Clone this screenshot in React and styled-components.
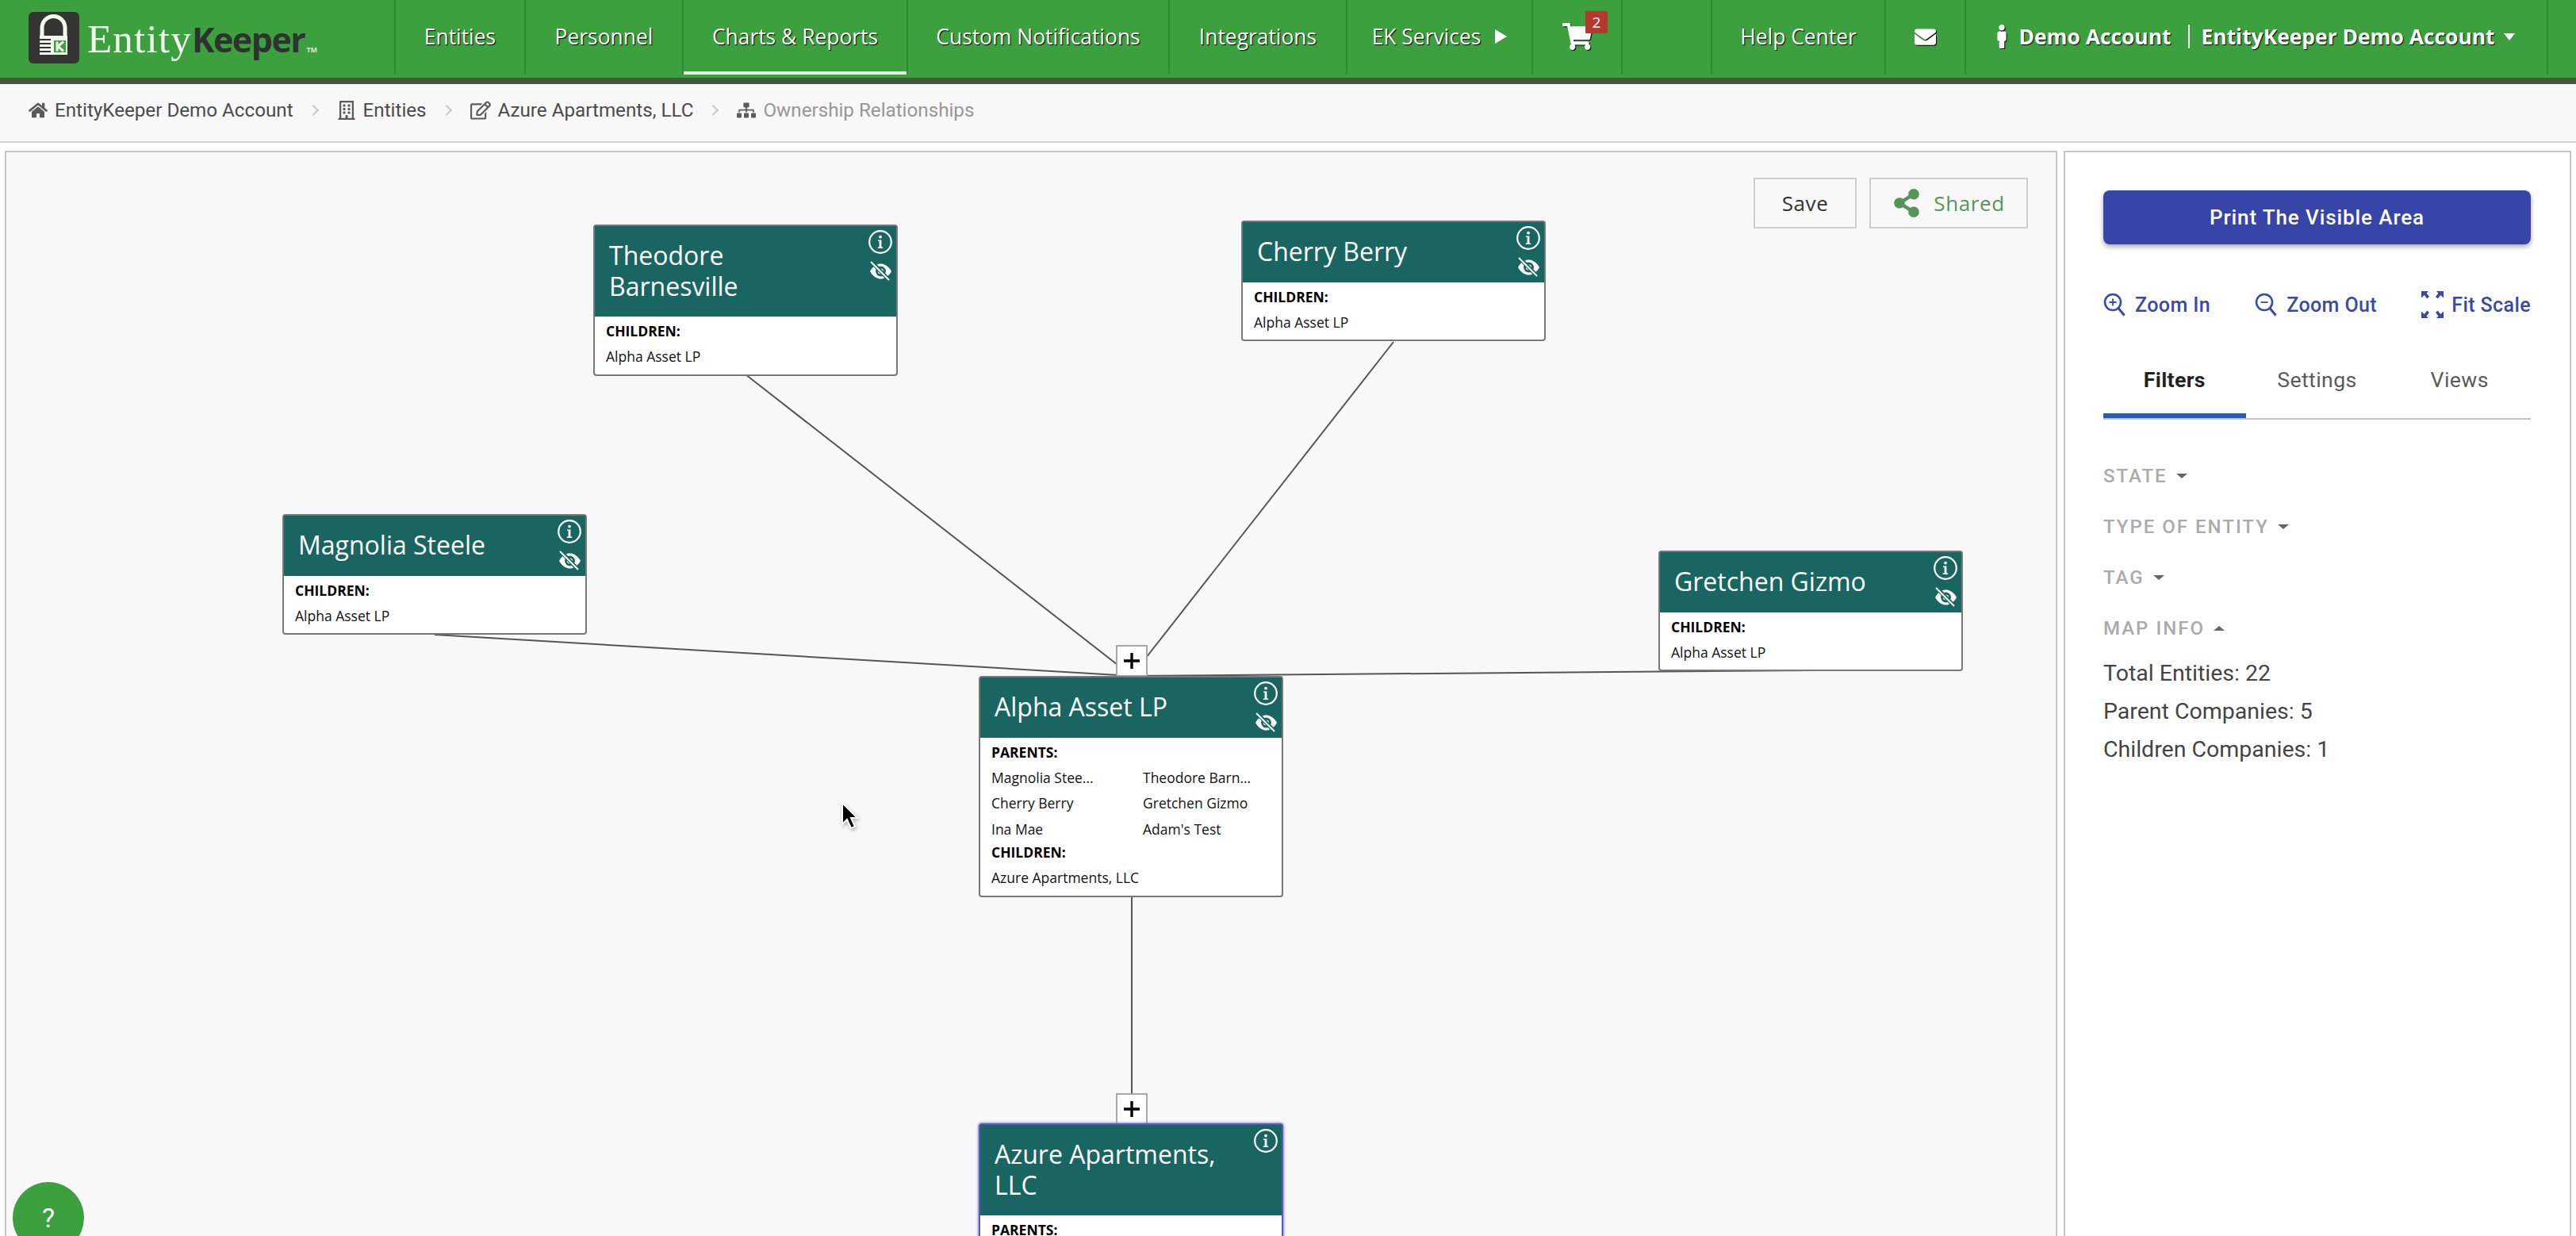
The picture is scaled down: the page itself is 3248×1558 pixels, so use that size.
import React from "react";
import styled, { createGlobalStyle } from "styled-components";
import {
	FaHome,
	FaRegBuilding,
	FaRegEdit,
	FaSitemap,
	FaShoppingCart,
	FaEnvelope,
	FaMale,
	FaShareAlt,
} from "react-icons/fa";

const GlobalStyle = createGlobalStyle`
	html, body {
		margin: 0;
		padding: 0;
		height: 100%;
		background: #fff;
		overflow: hidden;
	}
	* {
		box-sizing: border-box;
	}
`;

const Page = styled.div`
	height: 100vh;
	display: flex;
	flex-direction: column;
	overflow: hidden;
	font-family: Roboto, "Liberation Sans", sans-serif;
`;

/* top nav */
const Nav = styled.nav`
	height: 106px;
	flex: none;
	display: flex;
	background: #3ca03f;
	border-bottom: 8px solid #3f5b39;
`;

const LogoBlock = styled.div`
	width: 497px;
	height: 98px;
	padding: 15px 0 0 36px;
	display: flex;
	align-items: flex-start;
	flex: none;
`;

const LogoText = styled.div`
	margin-left: 10px;
	margin-top: 6px;
	display: flex;
	align-items: baseline;
	line-height: 56px;
`;

const LogoLight = styled.span`
	font-family: "Liberation Serif", serif;
	font-size: 51px;
	letter-spacing: 1.2px;
	color: #f2f8ee;
`;

const LogoDark = styled.span`
	font-family: "Open Sans", sans-serif;
	font-weight: 700;
	font-size: 43px;
	letter-spacing: -1.5px;
	color: #2f332f;
`;

const LogoMark = styled.span`
	font-family: "Open Sans", sans-serif;
	font-size: 9px;
	font-weight: 700;
	color: #d9e8d5;
	margin-left: 2px;
`;

const NavItem = styled.div`
	width: ${(p) => p.$w}px;
	height: 94px;
	flex: none;
	display: flex;
	align-items: center;
	justify-content: center;
	padding-bottom: 2px;
	padding-right: ${(p) => p.$pr || 0}px;
	position: relative;
	border-left: 2px solid #2f8a35;
	color: #fff;
	font-family: "Open Sans", sans-serif;
	font-size: 26.4px;
	font-weight: ${(p) => (p.$bold ? 700 : 400)};
	text-shadow: 1px 1px 1px #000;
	white-space: nowrap;
	box-shadow: ${(p) => (p.$active ? "inset 0 -4px 0 #e6efe4" : "none")};

	svg {
		filter: drop-shadow(1px 1px 0 #000);
	}
`;

const NavIconGap = styled.span`
	width: 6px;
`;

const NavTriangle = styled.span`
	width: 0;
	height: 0;
	margin-left: 18px;
	border-left: 15px solid #fff;
	border-top: 9px solid transparent;
	border-bottom: 9px solid transparent;
`;

const CartBadge = styled.span`
	position: absolute;
	left: 66px;
	top: 14px;
	width: 28px;
	height: 28px;
	background: #b4392c;
	color: #fff;
	font-size: 19px;
	line-height: 28px;
	text-align: center;
	text-shadow: none;
`;

const PipeSep = styled.span`
	width: 2px;
	height: 30px;
	margin: 0 15px 0 21px;
	background: #fff;
`;

const AccountCaret = styled.span`
	width: 0;
	height: 0;
	margin-left: 11px;
	border-top: 9px solid #fff;
	border-left: 7px solid transparent;
	border-right: 7px solid transparent;
`;

/* breadcrumb */
const Crumbs = styled.div`
	height: 74px;
	flex: none;
	display: flex;
	align-items: center;
	padding: 0 0 7px 36px;
	background: #f8f8f8;
	border-bottom: 2px solid #d0d0d0;
	font-size: 24.2px;
	color: #4b4b4b;
`;

const Crumb = styled.span`
	display: flex;
	align-items: center;
	gap: 9px;
	color: ${(p) => (p.$muted ? "#979797" : "#4b4b4b")};

	svg {
		color: #5b5b5b;
	}
`;

const CrumbArrow = styled.span`
	width: 10px;
	height: 10px;
	margin: 0 25px 0 20px;
	border-top: 2px solid #c8c8c8;
	border-right: 2px solid #c8c8c8;
	transform: rotate(45deg);
`;

/* main area */
const Main = styled.div`
	flex: 1;
	min-height: 0;
	display: flex;
	gap: 8px;
	padding: 10px 6px 0;
`;

const Canvas = styled.div`
	flex: 1;
	min-width: 0;
	position: relative;
	overflow: hidden;
	background: #f8f8f8;
	border: 2px solid #c4c4c4;
	border-bottom: none;
`;

const Links = styled.svg`
	position: absolute;
	left: 0;
	top: 0;
`;

const CanvasTools = styled.div`
	position: absolute;
	top: 32px;
	right: 35px;
	display: flex;
	gap: 16px;
`;

const ToolButton = styled.button`
	height: 64px;
	width: ${(p) => p.$w}px;
	display: flex;
	align-items: center;
	justify-content: center;
	gap: 16px;
	padding: 0;
	background: #f8f8f8;
	border: 2px solid #cdcdcd;
	font-family: "Open Sans", sans-serif;
	font-size: 26px;
	letter-spacing: 0.6px;
	color: ${(p) => p.$color};
`;

const Node = styled.div`
	position: absolute;
	left: ${(p) => p.$x}px;
	top: ${(p) => p.$y}px;
	width: 384px;
	background: #fff;
	border: 2px solid ${(p) => (p.$selected ? "#5a5ab8" : "#787878")};
	border-radius: 4px;
	box-shadow: ${(p) => (p.$selected ? "0 0 3px 1px #8a8ae0" : "none")};
	font-family: "Open Sans", sans-serif;
`;

const NodeHead = styled.div`
	position: relative;
	background: #196562;
	padding: 18px 56px 19px 18px;
	color: #fff;
	font-size: 32px;
	line-height: 38.5px;
`;

const NodeIcons = styled.div`
	position: absolute;
	top: 4px;
	right: 4px;
	display: flex;
	flex-direction: column;
	align-items: center;
	gap: 8px;
	color: #fff;
`;

const NodeBody = styled.div`
	padding: 5px 13px 6px 14px;
	color: #111;
	font-size: 17.5px;
`;

const NodeLabel = styled.div`
	height: 26px;
	line-height: 26px;
	margin-bottom: 3px;
	font-weight: 700;
	color: #000;
`;

const NodeRows = styled.div`
	display: grid;
	grid-template-columns: 191px 1fr;
`;

const NodeRow = styled.div`
	height: 32.5px;
	line-height: 32.5px;
	white-space: nowrap;
`;

const PlusButton = styled.div`
	position: absolute;
	left: ${(p) => p.$x}px;
	top: ${(p) => p.$y}px;
	width: 40px;
	height: 40px;
	background: #fff;
	border: 2px solid #a8a8a8;
	display: flex;
	align-items: center;
	justify-content: center;
`;

const HelpButton = styled.div`
	position: absolute;
	left: 8px;
	top: 1298px;
	width: 90px;
	height: 90px;
	border-radius: 50%;
	background: #3ca03f;
	color: #fff;
	font-size: 34px;
	text-align: center;
	line-height: 90px;
`;

const Pointer = styled.svg`
	position: absolute;
	left: 1052px;
	top: 818px;
	filter: drop-shadow(1px 2px 2px rgba(0, 0, 0, 0.3));
`;

/* side panel */
const Side = styled.aside`
	width: 640px;
	flex: none;
	background: #fff;
	border: 2px solid #c4c4c4;
	border-bottom: none;
	padding: 48px 49px 0 48px;
`;

const PrintButton = styled.button`
	width: 100%;
	height: 68px;
	display: block;
	background: #3745a8;
	border: none;
	border-radius: 8px;
	box-shadow: 0 3px 6px rgba(0, 0, 0, 0.35);
	color: #fff;
	font-family: Roboto, sans-serif;
	font-size: 26px;
	font-weight: 500;
	letter-spacing: 0.9px;
`;

const ZoomRow = styled.div`
	margin-top: 56px;
	height: 40px;
	display: flex;
	justify-content: space-between;
	align-items: center;
`;

const ZoomLink = styled.span`
	display: flex;
	align-items: center;
	gap: ${(p) => p.$gap || 12}px;
	color: #3949a8;
	font-size: 25px;
	font-weight: 500;
	letter-spacing: 0.4px;
`;

const Tabs = styled.div`
	margin-top: 50px;
	display: grid;
	grid-template-columns: repeat(3, 1fr);
	border-bottom: 2px solid #c4c4c4;
`;

const Tab = styled.div`
	height: 73px;
	padding-bottom: 24px;
	display: flex;
	align-items: center;
	justify-content: center;
	font-size: 26.6px;
	letter-spacing: 0.4px;
	font-weight: ${(p) => (p.$active ? 700 : 400)};
	color: ${(p) => (p.$active ? "#222" : "#5a5a5a")};
	box-shadow: ${(p) => (p.$active ? "inset 0 -6px 0 #1f5fbd" : "none")};
`;

const Filters = styled.div`
	margin-top: 53px;
	display: flex;
	flex-direction: column;
	gap: 28px;
`;

const FilterHead = styled.div`
	height: 36px;
	display: flex;
	align-items: center;
	gap: 11px;
	color: #ababab;
	font-size: 24px;
	font-weight: 500;
	letter-spacing: 2px;
`;

const FilterCaret = styled.span`
	width: 0;
	height: 0;
	border-left: 7px solid transparent;
	border-right: 7px solid transparent;
	border-top: ${(p) => (p.$up ? "none" : "6px solid #666")};
	border-bottom: ${(p) => (p.$up ? "6px solid #666" : "none")};
`;

const MapInfo = styled.div`
	margin-top: -13px;
	color: #444;
	font-size: 28.5px;
`;

const MapInfoRow = styled.div`
	height: 48px;
	line-height: 48px;
`;

const InfoIcon = () => (
	<svg width="32" height="32" viewBox="0 0 32 32" fill="none">
		<circle cx="16" cy="16" r="13.8" stroke="#fff" strokeWidth="2.2" />
		<circle cx="16" cy="9.6" r="1.9" fill="#fff" />
		<path d="M13 13.4h4.4v9h1.8v1.7h-6.4v-1.7h1.8v-7.3h-1.6z" fill="#fff" />
	</svg>
);

const EyeOffIcon = () => (
	<svg width="29" height="25" viewBox="0 0 29 25">
		<path d="M1 13C5 6 10 3.5 14.5 3.5S24 6 28 13c-4 7-9 9.5-13.5 9.5S5 20 1 13z" fill="#fff" />
		<circle cx="14.5" cy="13" r="6.4" fill="#196562" />
		<circle cx="14.5" cy="13" r="3.6" fill="#fff" />
		<path d="M2 0l24 25" stroke="#196562" strokeWidth="5" />
		<path d="M2 1l23 23" stroke="#fff" strokeWidth="2" />
	</svg>
);

const LogoLock = () => (
	<svg width="64" height="65" viewBox="0 0 64 65">
		<rect width="64" height="65" rx="6" fill="#323532" />
		<path d="M17 32V20a14.5 14.5 0 0 1 29 0v12" fill="none" stroke="#f2f8ee" strokeWidth="5" />
		<rect x="14" y="30" width="35" height="24" fill="#f2f8ee" />
		<path d="M14 35h14M14 40h14M14 45h14M14 50h14" stroke="#323532" strokeWidth="2" />
		<rect x="32" y="36" width="15" height="15" fill="#3ca03f" />
		<path d="M36 37.5v12M44 37.5l-7 6 7 6" fill="none" stroke="#f2f8ee" strokeWidth="3" />
	</svg>
);

const MagnifierIcon = ({ plus }) => (
	<svg width="28" height="32" viewBox="0 0 28 32" fill="none" stroke="#3949a8">
		<circle cx="12" cy="13" r="10" strokeWidth="2.6" />
		<path d="M19 20.5l7.5 9" strokeWidth="3" />
		<path d={plus ? "M7.5 13h9M12 8.5v9" : "M7.5 13h9"} strokeWidth="1.8" />
	</svg>
);

const FitIcon = () => (
	<svg width="28" height="34" viewBox="0 0 28 34" fill="#3949a8">
		<path d="M0 0h9L6.5 2.5 10 7l-2.8 2.4L3.8 5 0 8.5zM28 0h-9l2.5 2.5L18 7l2.8 2.4L24.2 5 28 8.5zM0 34h9l-2.5-2.5L10 27l-2.8-2.4L3.8 29 0 25.5zM28 34h-9l2.5-2.5L18 27l2.8-2.4 3.4 4.4 3.8-3.5z" />
	</svg>
);

const PlusIcon = () => (
	<svg width="20" height="20" viewBox="0 0 20 20">
		<path d="M0 10h20M10 0v20" stroke="#000" strokeWidth="3.4" />
	</svg>
);

const links = [
	[932, 280, 1419, 660],
	[1749, 239, 1419, 660],
	[540, 608, 1419, 660],
	[2275, 653, 1419, 660],
	[1419, 938, 1419, 1224],
];

const EntityNode = ({ x, y, title, hidden = true, selected, parents, children }) => (
	<Node $x={x} $y={y} $selected={selected}>
		<NodeHead>
			{title}
			<NodeIcons>
				<InfoIcon />
				{hidden && <EyeOffIcon />}
			</NodeIcons>
		</NodeHead>
		<NodeBody>
			{parents && (
				<>
					<NodeLabel>PARENTS:</NodeLabel>
					<NodeRows>
						{parents.map((p) => (
							<NodeRow key={p}>{p}</NodeRow>
						))}
					</NodeRows>
				</>
			)}
			{children && (
				<>
					<NodeLabel>CHILDREN:</NodeLabel>
					{children.map((c) => (
						<NodeRow key={c}>{c}</NodeRow>
					))}
				</>
			)}
		</NodeBody>
	</Node>
);

const App = () => {
	return (
		<Page>
			<GlobalStyle />
			<Nav>
				<LogoBlock>
					<LogoLock />
					<LogoText>
						<LogoLight>Entity</LogoLight>
						<LogoDark>Keeper</LogoDark>
						<LogoMark>TM</LogoMark>
					</LogoText>
				</LogoBlock>
				<NavItem $w={164}>Entities</NavItem>
				<NavItem $w={199}>Personnel</NavItem>
				<NavItem $w={283} $active>Charts &amp; Reports</NavItem>
				<NavItem $w={330}>Custom Notifications</NavItem>
				<NavItem $w={224}>Integrations</NavItem>
				<NavItem $w={234}>
					EK Services
					<NavTriangle />
				</NavItem>
				<NavItem $w={113}>
					<FaShoppingCart size={38} />
					<CartBadge>2</CartBadge>
				</NavItem>
				<NavItem $w={113} />
				<NavItem $w={219}>Help Center</NavItem>
				<NavItem $w={101}>
					<FaEnvelope size={27} />
				</NavItem>
				<NavItem $w={734} $bold $pr={10}>
					<FaMale size={30} />
					<NavIconGap />
					Demo Account
					<PipeSep />
					EntityKeeper Demo Account
					<AccountCaret />
				</NavItem>
				<NavItem $w={37} />
			</Nav>
			<Crumbs>
				<Crumb>
					<FaHome size={24} />
					EntityKeeper Demo Account
				</Crumb>
				<CrumbArrow />
				<Crumb>
					<FaRegBuilding size={24} />
					Entities
				</Crumb>
				<CrumbArrow />
				<Crumb>
					<FaRegEdit size={26} />
					Azure Apartments, LLC
				</Crumb>
				<CrumbArrow />
				<Crumb $muted>
					<FaSitemap size={24} />
					Ownership Relationships
				</Crumb>
			</Crumbs>
			<Main>
				<Canvas>
					<Links width="2600" height="1400">
						{links.map((l) => (
							<line
								key={l.join()}
								x1={l[0]}
								y1={l[1]}
								x2={l[2]}
								y2={l[3]}
								stroke="#555"
								strokeWidth="2"
							/>
						))}
					</Links>
					<EntityNode
						x={740}
						y={91}
						title="Theodore Barnesville"
						children={["Alpha Asset LP"]}
					/>
					<EntityNode
						x={1557}
						y={86}
						title="Cherry Berry"
						children={["Alpha Asset LP"]}
					/>
					<EntityNode
						x={348}
						y={456}
						title="Magnolia Steele"
						children={["Alpha Asset LP"]}
					/>
					<EntityNode
						x={2083}
						y={502}
						title="Gretchen Gizmo"
						children={["Alpha Asset LP"]}
					/>
					<PlusButton $x={1399} $y={621}>
						<PlusIcon />
					</PlusButton>
					<EntityNode
						x={1226}
						y={660}
						title="Alpha Asset LP"
						parents={[
							"Magnolia Stee...",
							"Theodore Barn...",
							"Cherry Berry",
							"Gretchen Gizmo",
							"Ina Mae",
							"Adam's Test",
						]}
						children={["Azure Apartments, LLC"]}
					/>
					<PlusButton $x={1399} $y={1186}>
						<PlusIcon />
					</PlusButton>
					<EntityNode
						x={1226}
						y={1224}
						title="Azure Apartments, LLC"
						hidden={false}
						selected
						parents={[]}
					/>
					<CanvasTools>
						<ToolButton $w={130} $color="#333">Save</ToolButton>
						<ToolButton $w={200} $color="#55955b">
							<FaShareAlt size={36} />
							Shared
						</ToolButton>
					</CanvasTools>
					<Pointer width="24" height="36" viewBox="0 0 24 36">
						<path
							d="M10 2v27l6-6 5 11 5-2-5-11h8z"
							transform="translate(-8 0)"
							fill="#000"
							stroke="#fff"
							strokeWidth="2"
						/>
					</Pointer>
					<HelpButton>?</HelpButton>
				</Canvas>
				<Side>
					<PrintButton>Print The Visible Area</PrintButton>
					<ZoomRow>
						<ZoomLink>
							<MagnifierIcon plus />
							Zoom In
						</ZoomLink>
						<ZoomLink>
							<MagnifierIcon />
							Zoom Out
						</ZoomLink>
						<ZoomLink $gap={10}>
							<FitIcon />
							Fit Scale
						</ZoomLink>
					</ZoomRow>
					<Tabs>
						<Tab $active>Filters</Tab>
						<Tab>Settings</Tab>
						<Tab>Views</Tab>
					</Tabs>
					<Filters>
						<FilterHead>
							STATE
							<FilterCaret />
						</FilterHead>
						<FilterHead>
							TYPE OF ENTITY
							<FilterCaret />
						</FilterHead>
						<FilterHead>
							TAG
							<FilterCaret />
						</FilterHead>
						<FilterHead>
							MAP INFO
							<FilterCaret $up />
						</FilterHead>
						<MapInfo>
							<MapInfoRow>Total Entities: 22</MapInfoRow>
							<MapInfoRow>Parent Companies: 5</MapInfoRow>
							<MapInfoRow>Children Companies: 1</MapInfoRow>
						</MapInfo>
					</Filters>
				</Side>
			</Main>
		</Page>
	);
};

export default App;
